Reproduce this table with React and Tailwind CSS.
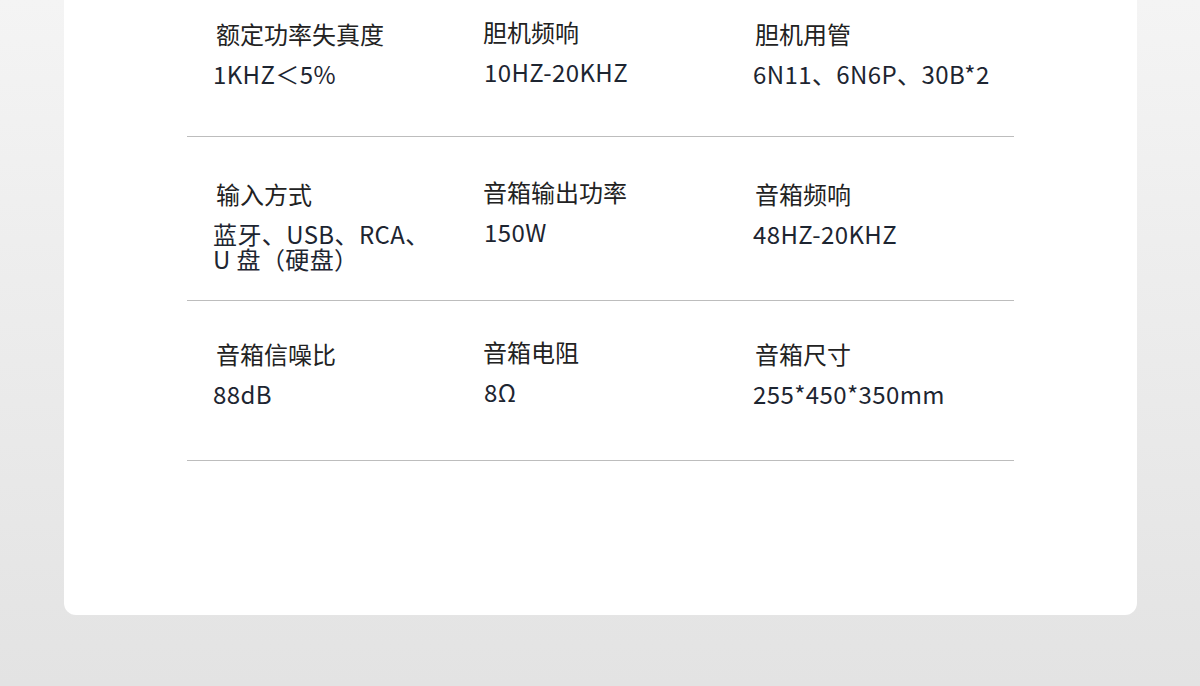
import React from 'react';

const rows = [
  {
    h: 'h-[137px] pt-[18px]',
    cells: [
      { label: '额定功率失真度', value: '1KHZ＜5%' },
      { label: '胆机频响', value: '10HZ-20KHZ' },
      { label: '胆机用管', value: '6N11、6N6P、30B*2' },
    ],
  },
  {
    h: 'h-[164px] pt-[41px]',
    cells: [
      { label: '输入方式', value: '蓝牙、USB、RCA、U 盘（硬盘）' },
      { label: '音箱输出功率', value: '150W' },
      { label: '音箱频响', value: '48HZ-20KHZ' },
    ],
  },
  {
    h: 'h-[160px] pt-[37px]',
    cells: [
      { label: '音箱信噪比', value: '88dB' },
      { label: '音箱电阻', value: '8Ω' },
      { label: '音箱尺寸', value: '255*450*350mm' },
    ],
  },
];

const labelIndent = ['ml-[3px]', '-ml-[1px]', 'ml-[2px]'];
const cellShift = ['mt-0', '-mt-[2px]', 'mt-0'];
const valueWidth = ['w-[222px]', 'w-auto', 'w-auto'];

const SpecCell = ({ label, value, col }) => (
  <div className={`pl-[26px] ${cellShift[col]}`}>
    <div className={`text-[24px] leading-[32px] text-[#222222] ${labelIndent[col]}`}>{label}</div>
    <div className={`mt-[11px] text-[24px] leading-[25px] tracking-[0.4px] text-[#1d2531] ${valueWidth[col]}`}>
      {value}
    </div>
  </div>
);

const App = () => {
  return (
    <div
      className="min-h-[686px] w-full bg-linear-to-b from-[#f4f4f4] to-[#e3e3e3]"
      style={{ fontFamily: '"Noto Sans CJK SC", "Noto Sans", sans-serif' }}
    >
      <div className="ml-[64px] w-[1073px] h-[615px] bg-white rounded-b-[12px] px-[123px]">
        {rows.map((row, i) => (
          <div
            key={i}
            className={`grid grid-cols-[271px_269px_1fr] border-b border-[#bdbdbd] box-border ${row.h}`}
          >
            {row.cells.map((c, j) => (
              <SpecCell key={j} label={c.label} value={c.value} col={j} />
            ))}
          </div>
        ))}
      </div>
    </div>
  );
};

export default App;
